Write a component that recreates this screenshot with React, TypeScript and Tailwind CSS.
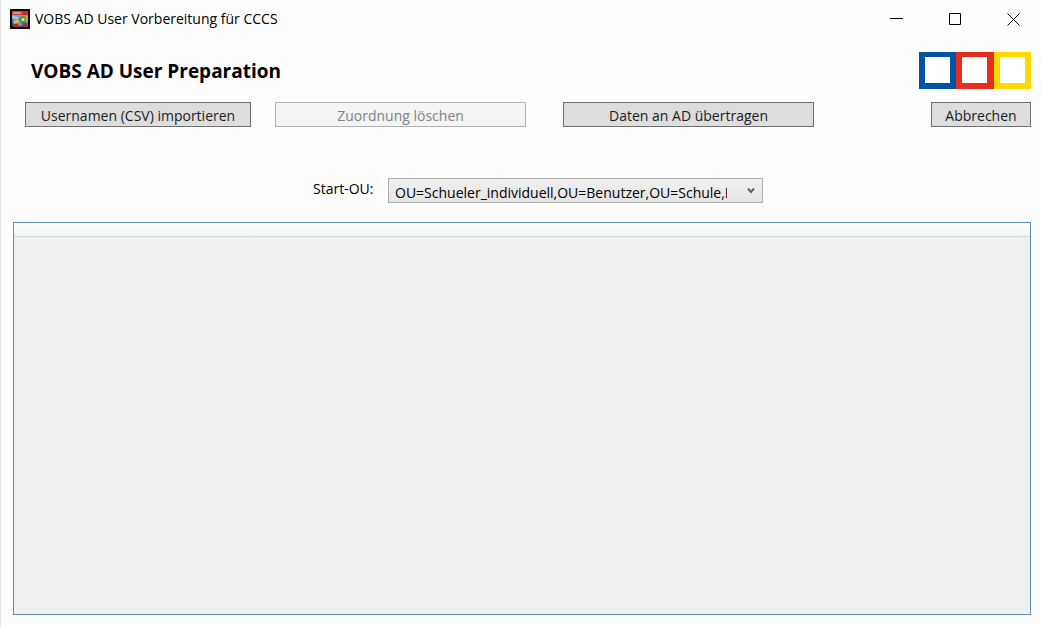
import type { ButtonHTMLAttributes } from 'react';

function ActionButton({ className = '', ...props }: ButtonHTMLAttributes<HTMLButtonElement>) {
  return (
    <button
      type="button"
      className={`h-[25px] border border-[#707070] bg-[#dddddd] pt-0.5 text-center text-sm leading-5 whitespace-nowrap text-[#1c1c1c] disabled:border-[#adb2b5] disabled:bg-[#f4f4f4] disabled:text-[#838383] ${className}`}
      {...props}
    />
  );
}

function AppIcon() {
  return (
    <svg viewBox="0 0 20 20" className="size-5" aria-hidden="true">
      <rect width="20" height="20" fill="#0c0a0c" />
      <rect x="2" y="2" width="16" height="5" fill="#c8443a" />
      <rect x="3" y="3" width="8" height="2" fill="#e08a7c" />
      <rect x="13" y="2" width="5" height="4" fill="#d8222a" />
      <rect x="2" y="6" width="16" height="4" fill="#d8805a" />
      <rect x="2" y="7" width="7" height="5" fill="#6a98d0" />
      <path d="M2 7l6 1v2l-5-1z" fill="#b4d2ec" />
      <rect x="2" y="11" width="16" height="6" fill="#2868b8" />
      <path d="M2 16c3-3 7-2 16 0v2H3z" fill="#ab2c28" />
      <path d="M3 12l4-2 3 2-1 2-5 1z" fill="#e8b43c" />
      <circle cx="13" cy="10.500" r="3.500" fill="#3c9c42" />
      <circle cx="13" cy="10.500" r="1.500" fill="#d7ebc2" />
      <path d="M15 7l3 1v5l-2 1z" fill="#e4902e" />
      <path d="M7 14l4-1 2 3-4 1z" fill="#5a9de0" />
    </svg>
  );
}

export default function App() {
  return (
    <div className="flex min-h-screen flex-col border-l border-[#e8e8e8] bg-[#fdfdfd] font-['Open_Sans','Noto_Sans',sans-serif] text-black">
      <header className="flex h-[38px] items-center pl-[9px]">
        <AppIcon />
        <span className="pl-[5px] text-sm leading-5">VOBS AD User Vorbereitung für CCCS</span>
        <div className="ml-auto flex h-full">
          <button type="button" aria-label="Minimieren" className="grid w-[59px] place-items-center">
            <svg viewBox="0 0 13 13" className="size-[13px]" stroke="#000" fill="none"><path d="M0 5.500h13" /></svg>
          </button>
          <button type="button" aria-label="Maximieren" className="grid w-[58px] place-items-center">
            <svg viewBox="0 0 13 13" className="size-[13px]" stroke="#000" fill="none"><path d="M.5.5h11v11H.5z" /></svg>
          </button>
          <button type="button" aria-label="Schließen" className="grid w-[58px] place-items-center">
            <svg viewBox="0 0 13 13" className="size-[13px]" stroke="#000" fill="none"><path d="M.5.5l12 12M12.500.5l-12 12" /></svg>
          </button>
        </div>
      </header>

      <main className="flex grow flex-col pr-[11px] pb-3 pl-3">
        <div className="flex items-start justify-between pt-3.5 pl-[18px]">
          <h1 className="pt-1 text-[19px] leading-[30px] font-bold">VOBS AD User Preparation</h1>
          <svg viewBox="0 0 112 37" className="h-[37px] w-28" aria-hidden="true">
            <rect width="37" height="37" fill="#0054a6" />
            <rect x="37" width="38" height="37" fill="#e62e1f" />
            <rect x="75" width="37" height="37" fill="#ffd800" />
            <rect x="6" y="5" width="25" height="26" fill="#fff" />
            <rect x="43" y="5" width="25" height="26" fill="#fff" />
            <rect x="81" y="5" width="25" height="26" fill="#fff" />
          </svg>
        </div>

        <div className="flex pt-[13px] pl-3">
          <ActionButton className="w-[226px]">Usernamen (CSV) importieren</ActionButton>
          <ActionButton className="ml-6 w-[251px]" disabled>Zuordnung löschen</ActionButton>
          <ActionButton className="ml-[37px] w-[251px]">Daten an AD übertragen</ActionButton>
          <ActionButton className="ml-auto w-[100px]">Abbrechen</ActionButton>
        </div>

        <div className="flex pt-[51px] pl-[300px]">
          <label htmlFor="start-ou" className="w-[75px] text-sm leading-[22px]">Start-OU:</label>
          <div className="relative">
            <select
              id="start-ou"
              className="block h-[25px] w-[375px] appearance-none overflow-hidden border border-[#acacac] bg-linear-to-b from-[#f0f0f0] to-[#e5e5e5] pt-1 pr-[35px] pl-1.5 text-sm leading-5 whitespace-nowrap"
            >
              <option>OU=Schueler_individuell,OU=Benutzer,OU=Schule,D</option>
            </select>
            <svg viewBox="0 0 8 6" className="pointer-events-none absolute top-[10px] right-2 h-1.5 w-2" fill="none" stroke="#606060" strokeWidth="2" aria-hidden="true">
              <path d="M1 .5l3 3.500 3-3.500" />
            </svg>
          </div>
        </div>

        <section aria-label="Benutzer" className="mt-[19px] flex grow flex-col border border-[#5f8bb8] bg-[#f0f0f0]">
          <div className="h-3.5 border-b border-[#d5d5d5] bg-linear-to-b from-white to-[#f2f3f5]" />
        </section>
      </main>
    </div>
  );
}
